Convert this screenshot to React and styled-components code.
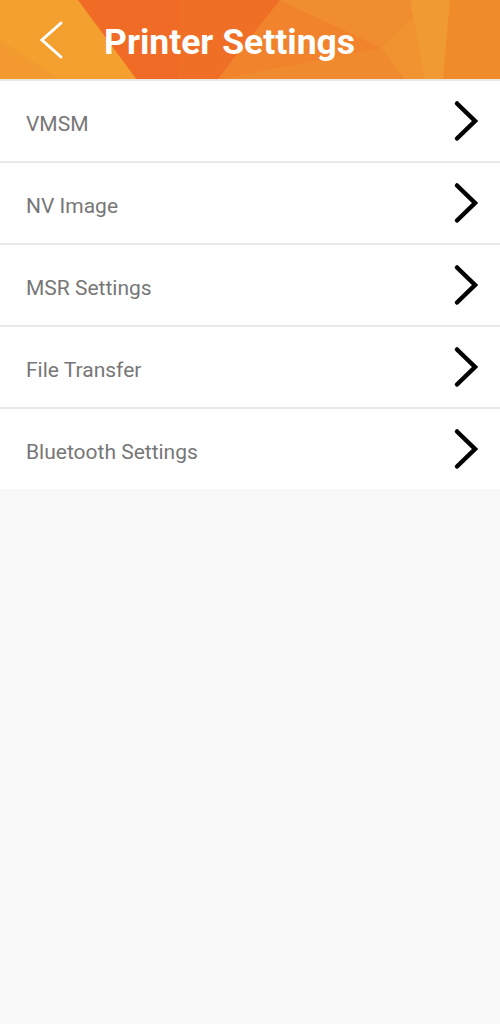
import styled, { createGlobalStyle } from "styled-components";

const GlobalStyle = createGlobalStyle`
  html, body {
    margin: 0;
    padding: 0;
    background: #f9f9f9;
    font-family: Roboto, "Noto Sans", Arial, sans-serif;
  }
`;

const Page = styled.div`
  width: 500px;
  min-height: 1024px;
  background: #f9f9f9;
`;

const Header = styled.header`
  position: relative;
  height: 79px;
  display: flex;
  align-items: center;
  padding-left: 38px;
  gap: 40px;
  border-bottom: 2px solid #ebe7e3;
  overflow: hidden;
`;

const HeaderArt = styled.svg`
  position: absolute;
  left: 0;
  top: 0;
  z-index: 0;
`;

const BackButton = styled.button`
  position: relative;
  z-index: 1;
  display: flex;
  padding: 0;
  border: 0;
  background: none;
`;

const Title = styled.h1`
  position: relative;
  z-index: 1;
  margin: 0;
  padding-top: 4px;
  color: #fff;
  font-size: 35.5px;
  font-weight: 700;
`;

const List = styled.ul`
  margin: 0;
  padding: 0;
  list-style: none;
`;

const Row = styled.li`
  height: 80px;
  display: flex;
  align-items: center;
  justify-content: space-between;
  padding: 0 21px 0 26px;
  background: #fff;
  border-bottom: ${(p) => (p.$last ? "none" : "2px solid #eaeaea")};
`;

const Label = styled.span`
  color: #777;
  font-size: 21px;
  padding-top: 5px;
`;

const facets = [
  { d: "M0 0 H500 V80 H0 Z", fill: "#f29430" },
  { d: "M0 0 H80 L140 80 H0 Z", fill: "#f3a02f" },
  { d: "M0 40 L60 80 H0 Z", fill: "#f2992f" },
  { d: "M78 0 H280 L217 80 H137 Z", fill: "#ef6b26" },
  { d: "M180 0 H280 L217 80 H178 Z", fill: "#f06f27" },
  { d: "M280 0 L382 48 L217 80 Z", fill: "#f0832c" },
  { d: "M217 80 L382 48 L405 80 Z", fill: "#f08a2e" },
  { d: "M280 0 H430 L382 48 Z", fill: "#f08d30" },
  { d: "M382 48 L430 0 L425 80 H405 Z", fill: "#f09330" },
  { d: "M410 0 H450 L443 80 H425 Z", fill: "#f09a33" },
  { d: "M450 0 H500 V80 H443 Z", fill: "#f08b2c" },
];

const Chevron = ({ color, width = 26, height = 42, stroke = 4.5, left }) => (
  <svg width={width} height={height} viewBox={`0 0 ${width} ${height}`}>
    <polyline
      points={
        left
          ? `${width - 3},3 4,${height / 2} ${width - 3},${height - 3}`
          : `4,3.5 ${width - 4},${height / 2} 4,${height - 3.5}`
      }
      fill="none"
      stroke={color}
      strokeWidth={stroke}
      strokeLinecap="round"
      strokeLinejoin="miter"
    />
  </svg>
);

const items = ["VMSM", "NV Image", "MSR Settings", "File Transfer", "Bluetooth Settings"];

function App() {
  return (
    <Page>
      <GlobalStyle />
      <Header>
        <HeaderArt width="500" height="80" viewBox="0 0 500 80">
          {facets.map((f, i) => (
            <path key={i} d={f.d} fill={f.fill} />
          ))}
        </HeaderArt>
        <BackButton>
          <Chevron left color="#fff" width={26} height={40} stroke={3} />
        </BackButton>
        <Title>Printer Settings</Title>
      </Header>
      <List>
        {items.map((item, i) => (
          <Row key={item} $last={i === items.length - 1}>
            <Label>{item}</Label>
            <Chevron color="#000" />
          </Row>
        ))}
      </List>
    </Page>
  );
}

export default App;
